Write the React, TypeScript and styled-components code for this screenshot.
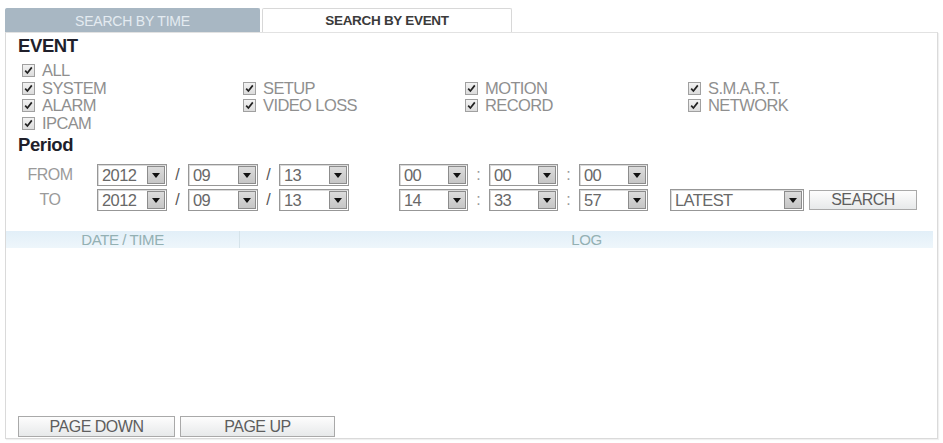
import styled, { createGlobalStyle } from 'styled-components';

const GlobalStyle = createGlobalStyle`
  body {
    margin: 0;
    background: #fff;
    font-family: 'Liberation Sans', Arial, sans-serif;
  }
`;

const Page = styled.div`
  width: 943px;
  height: 443px;
  box-sizing: border-box;
  padding: 8px 5px 0;
  overflow: hidden;
`;

const TabBar = styled.div`
  display: flex;
  height: 24px;
`;

const Tab = styled.div<{ $active?: boolean; $w: number }>`
  width: ${(p) => p.$w}px;
  box-sizing: border-box;
  display: flex;
  align-items: center;
  justify-content: center;
  font-size: ${(p) => (p.$active ? '13.5px' : '14px')};
  letter-spacing: ${(p) => (p.$active ? '-0.3px' : '-0.2px')};
  font-weight: ${(p) => (p.$active ? 700 : 400)};
  color: ${(p) => (p.$active ? '#3a3a3a' : '#e4ebf1')};
  background: ${(p) => (p.$active ? '#fff' : '#a8b7c3')};
  border: 1px solid ${(p) => (p.$active ? '#d8d8d8' : '#a8b7c3')};
  border-bottom: none;
  border-radius: 2px 2px 0 0;
  margin-left: ${(p) => (p.$active ? '2px' : '0')};
`;

const Panel = styled.section`
  width: 933px;
  height: 407px;
  box-sizing: border-box;
  border: 1px solid #dadada;
  border-top-color: #e2e2e2;
  box-shadow: 1px 1px 1px rgba(0, 0, 0, 0.06);
  display: flex;
  flex-direction: column;
`;

const Filters = styled.div`
  padding: 2px 0 0 12px;
`;

const Title = styled.h2<{ $top?: number }>`
  margin: ${(p) => p.$top || 0}px 0 0;
  font-size: 18.5px;
  letter-spacing: -0.4px;
  line-height: 22px;
  font-weight: 700;
  color: #1f1f2b;
`;

const EventGrid = styled.div`
  margin: 4px 0 0 4px;
`;

const EventRow = styled.div`
  display: grid;
  grid-template-columns: 221px 222px 223px 1fr;
  height: 17.5px;
  align-items: center;
`;

const Check = styled.label`
  display: flex;
  align-items: center;
  gap: 7px;
  font-size: 16.5px;
  letter-spacing: -0.6px;
  color: #8f8f8f;
  white-space: nowrap;
`;

const Box = styled.span`
  width: 13px;
  height: 13px;
  box-sizing: border-box;
  border: 1px solid #a0a0a0;
  background: linear-gradient(#f2f2f2, #dcdcdc);
  display: flex;
  align-items: center;
  justify-content: center;
`;

const PeriodRows = styled.div`
  margin-top: 8px;
  display: flex;
  flex-direction: column;
  gap: 3px;
`;

const PeriodRow = styled.div`
  display: flex;
  align-items: center;
  height: 22px;
`;

const RowLabel = styled.span`
  width: 64px;
  margin-right: 15px;
  text-align: center;
  font-size: 16px;
  letter-spacing: -0.5px;
  color: #9a9a9a;
`;

const Group = styled.div<{ $offset?: number }>`
  display: flex;
  align-items: center;
  margin-left: ${(p) => p.$offset || 0}px;
`;

const Combo = styled.div<{ $w: number }>`
  width: ${(p) => p.$w}px;
  height: 22px;
  box-sizing: border-box;
  border: 1px solid #979797;
  box-shadow: inset 1px 1px 0 #dadada;
  background: #fff;
  padding: 1px;
  display: flex;
`;

const ComboValue = styled.span`
  flex: 1;
  padding-left: 3px;
  font-size: 16.5px;
  letter-spacing: -0.6px;
  line-height: 18px;
  color: #686868;
`;

const ComboArrow = styled.span`
  width: 18px;
  box-sizing: border-box;
  border: 1px solid #8c8c8c;
  background: linear-gradient(#dcdcdc, #c6c6c6);
  display: flex;
  align-items: center;
  justify-content: center;

  &::after {
    content: '';
    border-left: 4px solid transparent;
    border-right: 4px solid transparent;
    border-top: 5px solid #111;
  }
`;

const Sep = styled.span<{ $w: number; $dim?: boolean }>`
  width: ${(p) => p.$w}px;
  text-align: center;
  font-size: 16px;
  color: ${(p) => (p.$dim ? '#9a9a9a' : '#555')};
`;

const Button = styled.button<{ $w: number; $h?: number }>`
  width: ${(p) => p.$w}px;
  height: ${(p) => p.$h || 21}px;
  box-sizing: border-box;
  padding: 0;
  border: 1px solid #a9a9a9;
  background: linear-gradient(#fdfdfd, #e7e9ea);
  font-family: inherit;
  font-size: 16px;
  letter-spacing: -0.5px;
  color: #5e5e5e;
`;

const LogHeader = styled.div`
  margin: 20px 4px 0 0;
  height: 17px;
  display: grid;
  grid-template-columns: 234px 1fr;
  background: linear-gradient(#e2eff8, #eef6fb);
  font-size: 15px;
  letter-spacing: -0.4px;
  color: #93b0b3;
  line-height: 17px;
  text-align: center;

  span:first-child {
    border-right: 1px solid #d5e3ea;
  }
`;

const LogBody = styled.div`
  flex: 1;
`;

const Footer = styled.div`
  display: flex;
  gap: 5px;
  padding: 0 0 1px 12px;
`;

const EVENT_ROWS = [
  ['ALL'],
  ['SYSTEM', 'SETUP', 'MOTION', 'S.M.A.R.T.'],
  ['ALARM', 'VIDEO LOSS', 'RECORD', 'NETWORK'],
  ['IPCAM'],
];

const CheckItem = ({ label }: { label: string }) => (
  <Check>
    <Box>
      <svg width="9" height="9" viewBox="0 0 9 9">
        <path d="M1.2 4.6 L3.4 7 L7.8 1.4" fill="none" stroke="#222" strokeWidth="1.7" />
      </svg>
    </Box>
    {label}
  </Check>
);

const Select = ({ value, w }: { value: string; w: number }) => (
  <Combo $w={w}>
    <ComboValue>{value}</ComboValue>
    <ComboArrow />
  </Combo>
);

const DateTimeRow = ({ label, date, time }: { label: string; date: string[]; time: string[] }) => (
  <>
    <RowLabel>{label}</RowLabel>
    <Group>
      <Select value={date[0]} w={70} />
      <Sep $w={21}>/</Sep>
      <Select value={date[1]} w={70} />
      <Sep $w={21}>/</Sep>
      <Select value={date[2]} w={70} />
    </Group>
    <Group $offset={50}>
      <Select value={time[0]} w={69} />
      <Sep $w={21} $dim>:</Sep>
      <Select value={time[1]} w={69} />
      <Sep $w={21} $dim>:</Sep>
      <Select value={time[2]} w={69} />
    </Group>
  </>
);

const App = () => (
  <Page>
    <GlobalStyle />
    <TabBar>
      <Tab $w={255}>SEARCH BY TIME</Tab>
      <Tab $w={250} $active>
        SEARCH BY EVENT
      </Tab>
    </TabBar>
    <Panel>
      <Filters>
        <Title>EVENT</Title>
        <EventGrid>
          {EVENT_ROWS.map((row) => (
            <EventRow key={row[0]}>
              {row.map((item) => (
                <CheckItem key={item} label={item} />
              ))}
            </EventRow>
          ))}
        </EventGrid>
        <Title $top={3}>Period</Title>
        <PeriodRows>
          <PeriodRow>
            <DateTimeRow label="FROM" date={['2012', '09', '13']} time={['00', '00', '00']} />
          </PeriodRow>
          <PeriodRow>
            <DateTimeRow label="TO" date={['2012', '09', '13']} time={['14', '33', '57']} />
            <Group $offset={22}>
              <Select value="LATEST" w={134} />
            </Group>
            <Group $offset={5}>
              <Button $w={108} $h={20} type="button">
                SEARCH
              </Button>
            </Group>
          </PeriodRow>
        </PeriodRows>
      </Filters>
      <LogHeader>
        <span>DATE / TIME</span>
        <span>LOG</span>
      </LogHeader>
      <LogBody />
      <Footer>
        <Button $w={157} type="button">
          PAGE DOWN
        </Button>
        <Button $w={155} type="button">
          PAGE UP
        </Button>
      </Footer>
    </Panel>
  </Page>
);

export default App;
